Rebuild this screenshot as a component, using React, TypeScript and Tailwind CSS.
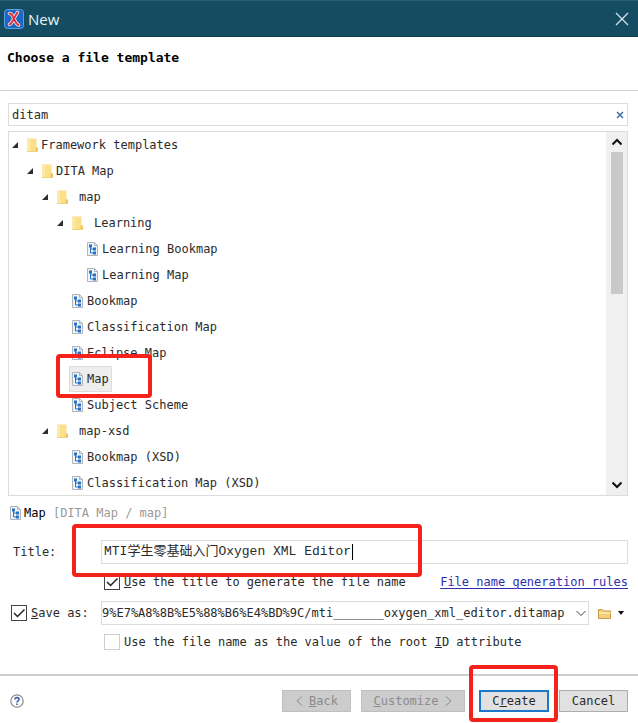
import { useState } from "react";
import type { ReactNode } from "react";

type Node = { label: string; depth: number; kind: "folder" | "file"; spaced?: boolean };

const NODES: Node[] = [
  { label: "Framework templates", depth: 0, kind: "folder" },
  { label: "DITA Map", depth: 1, kind: "folder" },
  { label: "map", depth: 2, kind: "folder", spaced: true },
  { label: "Learning", depth: 3, kind: "folder", spaced: true },
  { label: "Learning Bookmap", depth: 4, kind: "file" },
  { label: "Learning Map", depth: 4, kind: "file" },
  { label: "Bookmap", depth: 3, kind: "file" },
  { label: "Classification Map", depth: 3, kind: "file" },
  { label: "Eclipse Map", depth: 3, kind: "file" },
  { label: "Map", depth: 3, kind: "file" },
  { label: "Subject Scheme", depth: 3, kind: "file" },
  { label: "map-xsd", depth: 2, kind: "folder", spaced: true },
  { label: "Bookmap (XSD)", depth: 3, kind: "file" },
  { label: "Classification Map (XSD)", depth: 3, kind: "file" },
];

const INDENT = ["pl-[3px]", "pl-[18px]", "pl-[33px]", "pl-[48px]", "pl-[63px]"];

function AppLogo() {
  return (
    <svg width="20" height="20" viewBox="0 0 20 20" aria-hidden="true">
      <rect x="0.5" y="0.5" width="19" height="19" rx="3" fill="#1b68c4" stroke="#5ba0dc" />
      <path d="M5.500 4.500C8 4 8.500 7 10 10s2 5 4.500 6M13.500 3.500C12 5 11 8 9.500 10.500S7 15 5.500 15.500" fill="none" stroke="#f6e6ec" strokeWidth="3.600" strokeLinecap="round" />
      <path d="M5.500 4.500C8 4 8.500 7 10 10s2 5 4.500 6M13.500 3.500C12 5 11 8 9.500 10.500S7 15 5.500 15.500" fill="none" stroke="#dc3038" strokeWidth="1.900" strokeLinecap="round" />
    </svg>
  );
}

function TreeArrow() {
  return (
    <svg width="6" height="6" viewBox="0 0 6 6" aria-hidden="true">
      <path d="M6 0v6H0z" fill="#2d2d2d" />
    </svg>
  );
}

function FolderIcon() {
  return (
    <svg className="shrink-0" width="11" height="14" viewBox="0 0 11 14" aria-hidden="true">
      <path d="M0 0.500h9.500v9l1.500 1v3H0z" fill="#fce08c" />
      <path d="M0 0.500h3v13H0z" fill="#fde9a8" />
      <path d="M8.500 9.500H11v4H8.500z" fill="#eac766" />
      <path d="M0 13h11v1H0z" fill="#f0d27c" />
    </svg>
  );
}

function FileIcon() {
  return (
    <svg className="shrink-0" width="11" height="14" viewBox="0 0 11 14" aria-hidden="true">
      <path d="M0.500 0.500h7l3 3v10h-10z" fill="#eef4f9" stroke="#b0b4b8" />
      <path d="M7.500 0.500v3h3" fill="none" stroke="#b0b4b8" />
      <path d="M3.500 4v7H6M3.500 7H6" fill="none" stroke="#2672c4" strokeWidth="1" />
      <path d="M2 2.500h3v3H2zM6 5.500h3v3H6zM6 9.500h3v3H6z" fill="#2672c4" />
    </svg>
  );
}

function Check({ id, on, framed = true }: { id: string; on: boolean; framed?: boolean }) {
  const [checked, setChecked] = useState(on);
  return (
    <span className="relative flex size-4 shrink-0">
      <input
        id={id}
        type="checkbox"
        checked={checked}
        onChange={() => setChecked(!checked)}
        className={framed ? "size-4 appearance-none border border-[#444] bg-white" : "size-4 appearance-none border border-[#cfcfcf] bg-white"}
      />
      {checked && (
        <svg className="pointer-events-none absolute inset-0" width="16" height="16" viewBox="0 0 16 16" aria-hidden="true">
          <path d="M3 8l3.500 3.500L13.500 4.500" fill="none" stroke="#222" strokeWidth="1.500" />
        </svg>
      )}
    </span>
  );
}

function Highlight({ className }: { className: string }) {
  return <span aria-hidden="true" className={"pointer-events-none absolute z-10 rounded border-4 border-[#f5221b] " + className} />;
}

function DialogButton({ children, disabled, wide }: { children: ReactNode; disabled?: boolean; wide?: boolean }) {
  return (
    <button
      type="button"
      disabled={disabled}
      className={
        "flex h-[22px] items-center justify-center whitespace-pre border " +
        (wide ? "w-[104px] " : "w-[69px] ") +
        (disabled ? "border-[#bfbfbf] bg-[#cccccc] text-[#8b8b8b]" : "border-[#adadad] bg-[#e1e1e1]")
      }
    >
      {children}
    </button>
  );
}

function Chevron({ d, className }: { d: string; className: string }) {
  return (
    <svg className={className} width="10" height="10" viewBox="0 0 10 10" aria-hidden="true">
      <path d={d} fill="none" stroke="currentColor" />
    </svg>
  );
}

export default function App() {
  return (
    <div className="flex min-h-screen w-full flex-col overflow-hidden bg-white font-['DejaVu_Sans_Mono','Noto_Sans_CJK_SC',monospace] text-xs text-[#2b2b2b]">
      <header className="flex h-[37px] items-center border-t border-b border-t-[#2a6075] border-b-[#0e3d50] bg-[#144d62] pr-[9px] pl-1">
        <AppLogo />
        <h1 className="ml-1 font-['Open_Sans',sans-serif] text-[15px] text-[#eaf3f6]">New</h1>
        <button type="button" aria-label="Close" className="ml-auto mr-[-6px] px-[6px] text-[#d7e3e8]">
          <svg width="14" height="14" viewBox="0 0 14 14" aria-hidden="true">
            <path d="M1 1l12 12M13 1L1 13" stroke="currentColor" strokeWidth="1.300" />
          </svg>
        </button>
      </header>

      <div className="h-[54px] border-b border-[#cfcfcf] px-[7px] pt-3">
        <h2 className="text-[13px] leading-[18px] font-bold text-black">Choose a file template</h2>
      </div>

      <main className="flex flex-col px-2 pt-3 pr-[10px]">
        <div className="flex h-[23px] items-center border border-[#dcdcdc] pr-[3px] pl-[3px]">
          <input aria-label="Filter templates" defaultValue="ditam" className="min-w-0 flex-1 outline-none" />
          <button type="button" aria-label="Clear filter" className="text-[#3f6fa8]">
            <svg width="8" height="8" viewBox="0 0 8 8" aria-hidden="true">
              <path d="M1 1l6 6M7 1L1 7" stroke="currentColor" strokeWidth="1.500" />
            </svg>
          </button>
        </div>

        <div className="mt-[5px] flex h-[365px] overflow-hidden border border-[#dcdcdc]">
          <ul className="min-w-0 flex-1">
            {NODES.map((n) => {
              const selected = n.label === "Map";
              return (
                <li key={n.label} className={"relative flex h-[26px] items-center " + INDENT[n.depth]}>
                  <span className="flex w-[15px] shrink-0">{n.kind === "folder" && <TreeArrow />}</span>
                  {n.kind === "folder" ? (
                    <>
                      <FolderIcon />
                      <span className={n.spaced ? "ml-[11px]" : "ml-[3px]"}>{n.label}</span>
                    </>
                  ) : (
                    <span
                      className={
                        "-ml-[3px] flex h-[26px] items-center gap-1 border px-[2px] " +
                        (selected ? "border-[#dedede] bg-[#eeeeee]" : "border-transparent")
                      }
                    >
                      <FileIcon />
                      <span>{n.label}</span>
                    </span>
                  )}
                  {selected && <Highlight className="-top-3 left-[47px] h-11 w-24" />}
                </li>
              );
            })}
          </ul>
          <div className="flex w-[21px] shrink-0 flex-col items-center bg-[#f0f0f0] pb-[5px]">
            <svg className="my-[5px] shrink-0" width="10" height="10" viewBox="0 0 10 10" aria-hidden="true">
              <path d="M0.500 7.500L5 3l4.500 4.500" fill="none" stroke="#111" strokeWidth="2" />
            </svg>
            <div className="h-[142px] w-3 bg-[#c9c9c9]" />
            <svg className="mt-auto shrink-0" width="10" height="10" viewBox="0 0 10 10" aria-hidden="true">
              <path d="M0.500 2.500L5 7l4.500-4.500" fill="none" stroke="#111" strokeWidth="2" />
            </svg>
          </div>
        </div>

        <p className="mt-2 flex h-[18px] items-center pl-[2px] whitespace-pre">
          <FileIcon />
          <span className="ml-[3px] text-black">Map </span>
          <span className="text-[#9a9a9a]">[DITA Map / map]</span>
        </p>

        <div className="relative mt-[18px] flex h-6 items-center">
          <label htmlFor="title" className="w-[93px] shrink-0 pl-[5px]">Title:</label>
          <div className="flex h-6 min-w-0 flex-1 items-center border border-[#dcdcdc] pl-[2px] text-[13px] font-['Liberation_Mono','Noto_Sans_CJK_SC',monospace]">
            <input
              id="title"
              defaultValue="MTI学生零基础入门Oxygen XML Editor"
              className="w-[248px] outline-none"
            />
            <span aria-hidden="true" className="h-4 w-px bg-black" />
          </div>
          <Highlight className="-top-4 left-16 h-[53px] w-[350px]" />
        </div>

        <div className="mt-2 flex h-5 items-center pl-24">
          <Check id="use-title" on />
          <label htmlFor="use-title" className="ml-1 whitespace-nowrap"><u>U</u>se the title to generate the file name</label>
          <a href="#rules" className="ml-auto whitespace-nowrap text-[#2f2fae] underline underline-offset-2">File name generation rules</a>
        </div>

        <div className="mt-[9px] flex h-6 items-center">
          <div className="flex w-[93px] shrink-0 items-center pl-[3px]">
            <Check id="save" on />
            <label htmlFor="save" className="ml-1 whitespace-nowrap"><u>S</u>ave as:</label>
          </div>
          <div className="flex h-6 min-w-0 flex-1 items-center border border-[#dcdcdc] pr-[2px]">
            <input
              aria-label="Save path"
              defaultValue="9%E7%A8%8B%E5%88%B6%E4%BD%9C/mti_______oxygen_xml_editor.ditamap"
              className="min-w-0 flex-1 outline-none"
            />
            <button type="button" aria-label="Recent paths">
              <Chevron d="M0.500 3L5 7.500 9.500 3" className="text-[#444]" />
            </button>
          </div>
          <button type="button" aria-label="Browse" className="ml-[9px] flex items-center gap-[7px] pr-1">
            <svg width="13" height="11" viewBox="0 0 13 11" aria-hidden="true">
              <path d="M0.500 10.500v-9h4l1 1.500h7v7.500z" fill="#f2cd7c" stroke="#c99b43" />
              <path d="M1 5h11.500" stroke="#fdeab8" strokeWidth="1.500" />
            </svg>
            <svg width="6" height="4" viewBox="0 0 6 4" aria-hidden="true">
              <path d="M0 0h6L3 4z" fill="#111" />
            </svg>
          </button>
        </div>

        <div className="mt-[7px] flex h-5 items-center pl-24">
          <Check id="root-id" on={false} framed={false} />
          <label htmlFor="root-id" className="ml-1 whitespace-nowrap">Use the file name as the value of the root <u>I</u>D attribute</label>
        </div>
      </main>

      <footer className="mt-[22px] flex items-center border-t-2 border-[#cdcdcd] pt-[14px] pr-[10px] pb-3 pl-[10px]">
        <button type="button" aria-label="Help">
          <svg width="14" height="14" viewBox="0 0 14 14" aria-hidden="true">
            <circle cx="7" cy="7" r="6.200" fill="#fff" stroke="#8c8c8c" strokeWidth="1.200" />
            <path d="M5 5.500C5 3 9 3 9 5.300 9 6.800 7 6.800 7 8.500M7 9.500v1.500" fill="none" stroke="#3c5ba8" strokeWidth="1.600" />
          </svg>
        </button>
        <div className="ml-auto flex items-center">
          <DialogButton disabled>
            <Chevron d="M7 0.500L2 5l5 4.500" className="mr-1" /><u>B</u>ack
          </DialogButton>
          <span className="w-[10px]" />
          <DialogButton disabled wide>
            <u>C</u>ustomize<Chevron d="M3 0.500L8 5 3 9.500" className="ml-1" />
          </DialogButton>
          <span className="relative mr-[10px] ml-[14px] flex">
            <button type="button" className="h-[22px] w-[70px] border-2 border-[#1c78c8] bg-[#e1e1e1]">C<u>r</u>eate</button>
            <Highlight className="-top-[25px] -left-[10px] h-[57px] w-[89px]" />
          </span>
          <DialogButton>Cancel</DialogButton>
        </div>
      </footer>
    </div>
  );
}
